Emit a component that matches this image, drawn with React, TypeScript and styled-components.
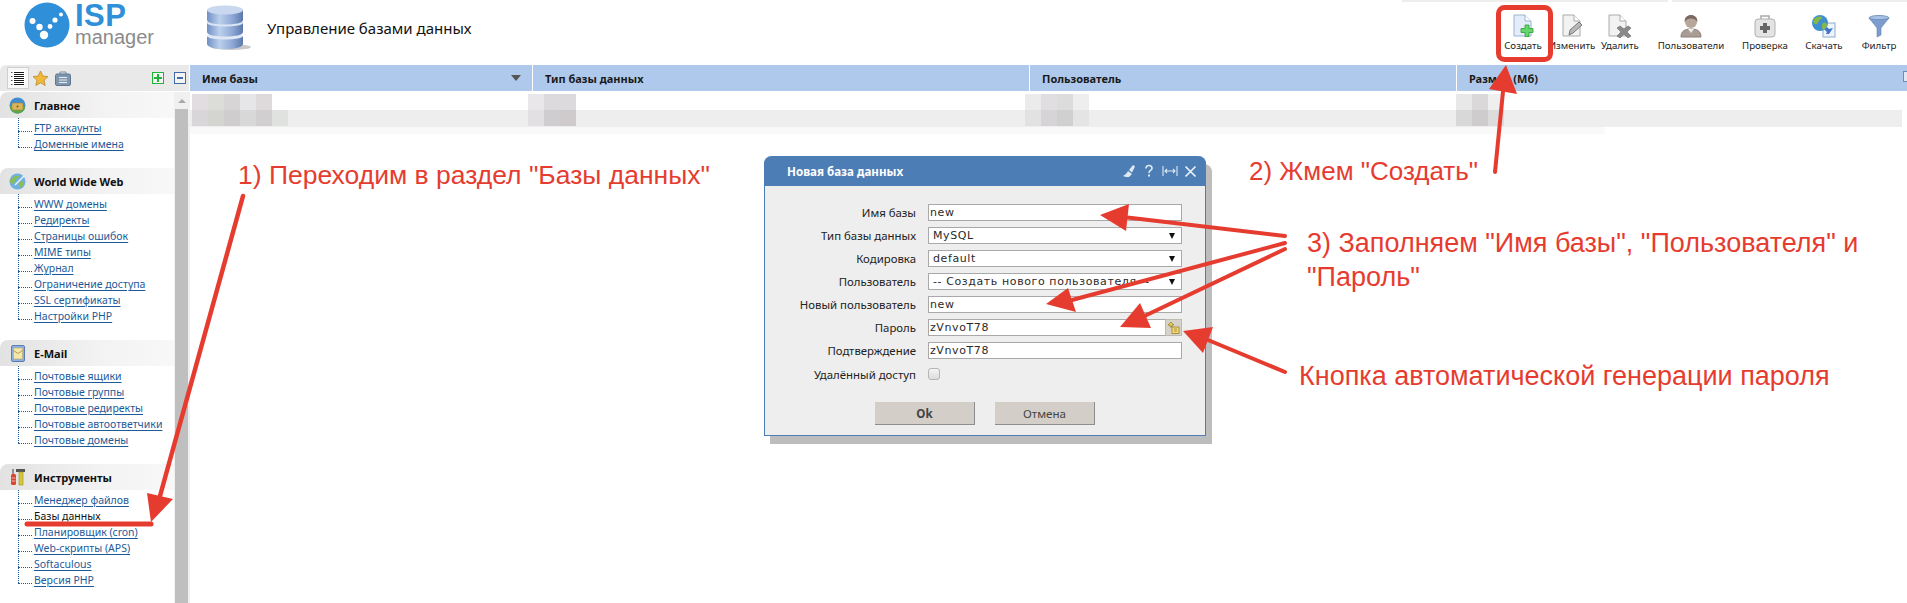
import React from "react";
import styled, { createGlobalStyle } from "styled-components";

const Global = createGlobalStyle`
  html, body { margin: 0; padding: 0; background: #fff; }
  body { font-family: "Noto Sans", "DejaVu Sans", sans-serif; }
`;

const UI = `"Noto Sans", "DejaVu Sans", sans-serif`;
const WIDE = `"DejaVu Sans", "Liberation Sans", sans-serif`;
const RED = "#e63c30";

const Page = styled.div`
  position: relative;
  width: 1907px;
  height: 603px;
  overflow: hidden;
  background: #fff;
`;
const Header = styled.header`
  display: flex;
  align-items: flex-start;
  height: 65px;
  position: relative;
`;
const TopStrip = styled.div`
  position: absolute;
  top: 0;
  left: 1402px;
  right: 0;
  height: 2px;
  background: linear-gradient(90deg, #eee 0, #eee 266px, #fff 266px, #fff 270px, #eee 270px);
`;
const Logo = styled.div`
  display: flex;
  width: 207px;
  padding: 2px 0 0 24px;
  box-sizing: border-box;
`;
const LogoWords = styled.div`
  display: flex;
  flex-direction: column;
  margin-left: 5px;
  font-family: "Liberation Sans", sans-serif;
`;
const LogoIsp = styled.span`
  color: #2f8fd8;
  font-size: 31px;
  font-weight: 700;
  line-height: 26px;
  letter-spacing: 0.5px;
  margin-top: 1px;
`;
const LogoManager = styled.span`
  color: #8b8b8b;
  font-size: 20px;
  line-height: 20px;
  margin-top: -2px;
`;
const PageTitle = styled.div`
  display: flex;
  align-items: center;
  gap: 16px;
  padding-top: 5px;
  flex: 1;
  font-size: 15px;
  color: #111;
  font-family: ${UI};
`;
const Tools = styled.nav`
  display: flex;
  padding: 14px 5px 0 0;
`;
const Tool = styled.div<{ $w: number }>`
  width: ${(p) => p.$w}px;
  display: flex;
  flex-direction: column;
  align-items: center;
  font-size: 9.7px;
  line-height: 12px;
  color: #222;
  gap: 2px;
`;
const Body = styled.div`
  display: flex;
  height: 538px;
`;
const Side = styled.aside`
  width: 190px;
  display: flex;
  flex-direction: column;
  flex: none;
`;
const SideBar = styled.div`
  height: 26px;
  margin-right: 1px;
  display: flex;
  align-items: center;
  background: #e9e9e9;
  border-top-left-radius: 6px;
  padding-left: 7px;
  box-sizing: border-box;
`;
const ActiveTab = styled.div`
  width: 22px;
  height: 22px;
  box-sizing: border-box;
  background: #f7f7f7;
  border: 1px solid #cfcfcf;
  display: flex;
  align-items: center;
  justify-content: center;
`;
const TabIcon = styled.div`
  display: flex;
  margin-left: 3px;
  margin-right: 3px;
`;
const ExpandBox = styled.div<{ $c: string; $ml: number }>`
  width: 12px;
  height: 12px;
  box-sizing: border-box;
  border: 1px solid ${(p) => p.$c};
  margin-left: ${(p) => p.$ml}px;
  display: flex;
  align-items: center;
  justify-content: center;
  background: #f4f4f4;
`;
const SideScroll = styled.div`
  display: flex;
  flex: 1;
  margin-top: 1px;
  min-height: 0;
`;
const Nav = styled.div`
  width: 174px;
  flex: none;
`;
const Scrollbar = styled.div`
  width: 16px;
  display: flex;
  flex-direction: column;
  align-items: stretch;
  background: #f0f0f0;
  box-sizing: border-box;
  padding-right: 2px;
  padding-left: 1px;
`;
const ScrollUp = styled.div`
  height: 17px;
  display: flex;
  align-items: center;
  justify-content: center;
`;
const ScrollArrow = styled.div`
  width: 0;
  height: 0;
  border-left: 4px solid transparent;
  border-right: 4px solid transparent;
  border-bottom: 4px solid #aaa;
`;
const ScrollThumb = styled.div`
  flex: 1;
  background: #bfbfbf;
`;
const Section = styled.section`
  margin-bottom: 16px;
`;
const SectionHead = styled.div`
  height: 26px;
  display: flex;
  align-items: center;
  background: linear-gradient(90deg, #e2e2e2 0%, #f3f3f3 60%, #f8f8f8 100%);
  border-top-left-radius: 8px;
  font-weight: 700;
  font-size: 11px;
  color: #111;
`;
const SectionIcon = styled.div`
  width: 34px;
  display: flex;
  justify-content: center;
  flex: none;
  padding-left: 1px;
  box-sizing: border-box;
`;
const TreeList = styled.ul`
  list-style: none;
  margin: 0;
  padding: 2px 0 0 0;
`;
const TreeItem = styled.li<{ $active?: boolean }>`
  position: relative;
  height: 16px;
  line-height: 16px;
  padding-left: 34px;
  font-size: 10.5px;
  color: ${(p) => (p.$active ? "#111" : "#1d5a99")};
  text-decoration: ${(p) => (p.$active ? "none" : "underline")};
  text-underline-offset: 2px;
  white-space: nowrap;
  &::before {
    content: "";
    position: absolute;
    left: 18px;
    top: 11px;
    width: 14px;
    border-top: 1px dotted #1d5a99;
  }
  &::after {
    content: "";
    position: absolute;
    left: 18px;
    top: -2px;
    height: 13px;
    border-left: 1px dotted #1d5a99;
  }
  &:not(:first-child)::after {
    top: -5px;
    height: 16px;
  }
`;
const Main = styled.main`
  flex: 1;
  display: flex;
  flex-direction: column;
  min-width: 0;
`;
const GridHead = styled.div`
  height: 26px;
  display: grid;
  grid-template-columns: 343px 497px 427px 1fr;
  background: #aec9ec;
`;
const HeadCell = styled.div`
  display: flex;
  align-items: center;
  justify-content: space-between;
  padding: 0 13px 0 12px;
  font-size: 11px;
  font-weight: 700;
  color: #1a1a1a;
  border-right: 1px solid #fff;
  position: relative;
  &:last-child { border-right: 0; }
`;
const SortMark = styled.span`
  width: 0;
  height: 0;
  border-left: 5px solid transparent;
  border-right: 5px solid transparent;
  border-top: 6px solid #555;
  margin-right: -2px;
`;
const ColMenu = styled.span`
  position: absolute;
  top: 6px;
  right: -6px;
  width: 8px;
  height: 9px;
  border: 1px solid #6a8cb8;
  background: #dfe8f4;
`;
const Rows = styled.div`
  position: relative;
  padding-right: 5px;
`;
const Row = styled.div<{ $bg: string; $h: number; $end?: number }>`
  height: ${(p) => p.$h}px;
  display: grid;
  grid-template-columns: 343px 497px 427px 1fr;
  background: ${(p) => p.$bg};
  margin-right: ${(p) => p.$end ?? 0}px;
`;
const Mosaic = styled.div<{ $ml: number; $top: number }>`
  display: flex;
  margin-left: ${(p) => p.$ml}px;
  padding-top: ${(p) => p.$top}px;
`;
const Tile = styled.div<{ $c: string }>`
  width: 16px;
  height: 16px;
  background: ${(p) => p.$c};
`;

const Modal = styled.div`
  position: absolute;
  left: 764px;
  top: 156px;
  width: 442px;
  height: 280px;
  box-sizing: border-box;
  border: 1px solid #4d7db5;
  border-top: 0;
  border-radius: 8px 8px 0 0;
  background: #eee;
  box-shadow: 6px 8px 0 #bdbdbd;
  display: flex;
  flex-direction: column;
`;
const ModalHead = styled.div`
  height: 30px;
  margin: 0 -1px;
  background: #4d7db5;
  border-radius: 8px 8px 0 0;
  display: flex;
  align-items: center;
  padding: 0 9px 0 23px;
  color: #fff;
  font-size: 11.6px;
  font-weight: 700;
`;
const ModalTitle = styled.div`
  flex: 1;
`;
const ModalIcons = styled.div`
  display: flex;
  align-items: center;
  gap: 6px;
`;
const Form = styled.div`
  display: grid;
  grid-template-columns: 151px 254px;
  column-gap: 12px;
  row-gap: 6px;
  padding-top: 18px;
  grid-auto-rows: 17px;
  align-items: center;
`;
const Label = styled.div`
  text-align: right;
  font-size: 11.4px;
  color: #222;
  white-space: nowrap;
`;
const TextBox = styled.div`
  height: 17px;
  box-sizing: border-box;
  background: #fff;
  border: 1px solid #a9a9a9;
  padding-left: 1px;
  display: flex;
  align-items: center;
  font-family: ${WIDE};
  font-size: 11px;
  letter-spacing: 0.6px;
  color: #2a2a2a;
  position: relative;
`;
const SelectBox = styled(TextBox)`
  padding-left: 4px;
  overflow: hidden;
  white-space: nowrap;
`;
const SelectArrow = styled.span`
  position: absolute;
  right: 0;
  top: 0;
  bottom: 0;
  width: 18px;
  background: #fff;
  display: flex;
  align-items: center;
  justify-content: center;
  &::after {
    content: "";
    border-left: 3.5px solid transparent;
    border-right: 3.5px solid transparent;
    border-top: 6px solid #111;
  }
`;
const KeyButton = styled.span`
  position: absolute;
  right: -1px;
  top: -1px;
  width: 17px;
  height: 17px;
  box-sizing: border-box;
  background: #d6d2c9;
  border: 1px solid #bdbab2;
  display: flex;
  align-items: center;
  justify-content: center;
`;
const Check = styled.div`
  width: 12px;
  height: 12px;
  box-sizing: border-box;
  border: 1px solid #b5b5b5;
  border-radius: 3px;
  background: linear-gradient(#f4f4f4, #dcdcdc);
  margin-top: 1px;
`;
const CheckLabel = styled(Label)`
  margin-top: 2px;
`;
const Buttons = styled.div`
  display: flex;
  gap: 20px;
  padding: 20px 0 0 110px;
`;
const Button = styled.div<{ $strong?: boolean }>`
  width: 100px;
  height: 23px;
  box-sizing: border-box;
  background: #d3cfc8;
  border-right: 1px solid #8e8e8e;
  border-bottom: 1px solid #8e8e8e;
  display: flex;
  align-items: center;
  justify-content: center;
  font-size: 11.6px;
  font-weight: ${(p) => (p.$strong ? 700 : 400)};
  color: #444;
`;
const Note = styled.div<{ $x: number; $y: number; $size?: number }>`
  position: absolute;
  left: ${(p) => p.$x}px;
  top: ${(p) => p.$y}px;
  font-family: "Liberation Sans", Arial, sans-serif;
  font-size: ${(p) => p.$size ?? 27}px;
  line-height: 34px;
  color: ${RED};
  white-space: nowrap;
`;
const Overlay = styled.svg`
  position: absolute;
  left: 0;
  top: 0;
  width: 1907px;
  height: 603px;
  pointer-events: none;
`;

const LogoMark = () => (
  <svg width="46" height="46" viewBox="0 0 46 46">
    <circle cx="23" cy="23" r="22.5" fill="#2f8fd8" />
    <g fill="#fff">
      <circle cx="8.5" cy="19" r="3" />
      <circle cx="15.5" cy="25" r="3.2" />
      <circle cx="20" cy="33" r="4.2" />
      <circle cx="26" cy="24.5" r="2.4" />
      <circle cx="31" cy="18" r="2.6" />
      <circle cx="37" cy="12.5" r="2" />
    </g>
  </svg>
);

const DbIcon = () => (
  <svg width="44" height="46" viewBox="0 0 44 46">
    <defs>
      <linearGradient id="dbg" x1="0" x2="1" y1="0" y2="0">
        <stop offset="0" stopColor="#6f8fc4" />
        <stop offset=".35" stopColor="#bcd0ec" />
        <stop offset=".7" stopColor="#8fa9d6" />
        <stop offset="1" stopColor="#5c79ad" />
      </linearGradient>
    </defs>
    <ellipse cx="24" cy="42" rx="20" ry="3" fill="#c9c9c9" />
    <path d="M0 31h36v8c0 3-8 5-18 5s-18-2-18-5z" fill="url(#dbg)" />
    <ellipse cx="18" cy="31" rx="18" ry="3.5" fill="#dfe8f5" />
    <path d="M0 17h36v10c0 3-8 4.500-18 4.500S0 30 0 27z" fill="url(#dbg)" />
    <ellipse cx="18" cy="18" rx="18" ry="3.500" fill="#dbe5f3" />
    <path d="M0 5h36v10c0 3-8 4.500-18 4.500S0 18 0 15z" fill="url(#dbg)" />
    <ellipse cx="18" cy="5" rx="18" ry="4.500" fill="#c9d8ee" />
  </svg>
);

const Sheet = ({ tint = "#f2f2f2", line = "#aaa" }: { tint?: string; line?: string }) => (
  <path d="M3 1h11l6 6v15H3z" fill={tint} stroke={line} strokeWidth="1" />
);

const CreateIcon = () => (
  <svg width="24" height="24" viewBox="0 0 24 24">
    <Sheet tint="#e3ecf8" line="#9db4d2" />
    <path d="M14 1v6h6" fill="#fff" stroke="#9db4d2" />
    <path d="M14 11h4v3.500h4v4h-4v4h-4v-4h-4v-4h4z" fill="#66d66a" stroke="#2b9c37" strokeWidth=".8" />
  </svg>
);
const EditIcon = () => (
  <svg width="24" height="24" viewBox="0 0 24 24">
    <Sheet />
    <path d="M14 1v6h6" fill="#fff" stroke="#aaa" />
    <path d="M9 21l1-5 9-8 3 3-9 8z" fill="#b8b8b8" stroke="#777" strokeWidth="1" />
  </svg>
);
const DeleteIcon = () => (
  <svg width="24" height="24" viewBox="0 0 24 24">
    <path d="M1 1h11l6 6v15H1z" fill="#f2f2f2" stroke="#aaa" />
    <path d="M12 1v6h6" fill="#fff" stroke="#aaa" />
    <path d="M12 12l4 3 4-3 3 2-4 4 4 4-3 2-4-4-4 4-3-2 4-4-4-4z" fill="#8a8a8a" stroke="#666" strokeWidth=".6" />
  </svg>
);
const UsersIcon = () => (
  <svg width="24" height="24" viewBox="0 0 24 24">
    <path d="M2 23c0-6 4-8 10-8s10 2 10 8z" fill="#a89c95" stroke="#8d7f79" />
    <path d="M9 15l3 4 3-4z" fill="#eee" />
    <circle cx="12" cy="8" r="6" fill="#b8a69b" />
    <path d="M5.500 8c0-5 3-7 6.500-7s6.500 2 6.500 7c-2-3-4-3.500-6.500-3.500S7.500 5 5.500 8z" fill="#7b6a62" />
  </svg>
);
const CheckIcon = () => (
  <svg width="24" height="24" viewBox="0 0 24 24">
    <path d="M8 5V2h8v3" fill="none" stroke="#aaa" strokeWidth="1.500" />
    <rect x="2" y="5" width="20" height="18" rx="3" fill="#e3e3e3" stroke="#b0b0b0" />
    <path d="M10 9h4v3h3v4h-3v3h-4v-3H7v-4h3z" fill="#666" />
  </svg>
);
const DownloadIcon = () => (
  <svg width="26" height="24" viewBox="0 0 26 24">
    <rect x="12" y="9" width="12" height="14" fill="#eef3fb" stroke="#8eaad3" />
    <path d="M22 14l-4 6h-3l1-2-3-3 3-2 2 2z" fill="#3f76c8" />
    <circle cx="9" cy="9" r="8" fill="#3f8fd0" />
    <path d="M3 5c3-3 6-3 8-2 1 2-2 2-3 4s-2 4-4 3-2-3-1-5z M12 9c2-1 4 0 4 2s-2 4-4 5c-1-2-2-5 0-7z" fill="#84b84a" />
  </svg>
);
const FilterIcon = () => (
  <svg width="24" height="24" viewBox="0 0 24 24">
    <ellipse cx="12" cy="4" rx="10" ry="2.500" fill="#a9c2e6" stroke="#7a97c4" />
    <path d="M2 4l8 10v9l4-2v-7l8-10c-3 2-17 2-20 0z" fill="#7b9ccc" stroke="#6384b6" strokeWidth=".6" />
  </svg>
);

const ListGlyph = () => (
  <svg width="16" height="16" viewBox="0 0 16 16">
    <rect x="1" y="0.500" width="14" height="15" fill="#fff" />
    {[2, 4, 6, 8, 10, 12, 14].map((y) => (
      <path key={y} d="M4 0h10" transform={`translate(0 ${y + 0.5})`} stroke="#1a1a1a" strokeWidth="1" />
    ))}
    {[2, 6, 10, 14].map((y) => (
      <path key={y} d="M1 0h1.500" transform={`translate(0 ${y + 0.5})`} stroke="#555" strokeWidth="1" />
    ))}
  </svg>
);
const StarGlyph = () => (
  <svg width="17" height="17" viewBox="0 0 17 17">
    <path d="M8.500 1l2.300 5 5.200.6-3.900 3.600 1.100 5.300-4.700-2.700-4.700 2.700 1.100-5.300L1 6.600 6.200 6z" fill="#f0b93a" stroke="#b98a2a" strokeWidth=".8" />
  </svg>
);
const CaseGlyph = () => (
  <svg width="16" height="15" viewBox="0 0 16 15">
    <path d="M5 3V1h6v2" fill="none" stroke="#7a8da3" />
    <rect x="0.500" y="3" width="15" height="11.500" rx="1.500" fill="#7f95ad" stroke="#5f7790" />
    <path d="M4 6.500h8M4 9h8M4 11.500h8" stroke="#e8eef5" />
  </svg>
);

const GlobeFolder = () => (
  <svg width="17" height="17" viewBox="0 0 17 17">
    <circle cx="8.500" cy="8.500" r="8" fill="#3f8fd0" />
    <path d="M1 9c4 1 11 1 15 0v2c-1 3-4 5.500-7.500 5.500S2 14 1 11z" fill="#5aa846" />
    <rect x="3" y="6" width="11" height="7" rx="1" fill="#d8b45c" stroke="#a78338" strokeWidth=".6" />
    <circle cx="8.500" cy="9.500" r="1" fill="#7b5a1f" />
  </svg>
);
const GlobeArrow = () => (
  <svg width="17" height="17" viewBox="0 0 17 17">
    <circle cx="8.500" cy="8.500" r="8" fill="#6fb0e0" />
    <path d="M2 6c3-3 6-4 8-3 0 2-3 2-4 5s-2 4-4 2-1-3 0-4zM10 9c2-1 5 0 5 1s-2 4-4 5c-1-2-2-4-1-6z" fill="#8bbd53" />
    <path d="M6 12l9-9" stroke="#e8f2fb" strokeWidth="1.500" />
  </svg>
);
const MailIcon = () => (
  <svg width="14" height="17" viewBox="0 0 14 17">
    <rect x="0.500" y="0.500" width="13" height="16" rx="1.500" fill="#8fb0e0" stroke="#5b7cb3" />
    <rect x="2.500" y="3" width="9" height="11" fill="#f5e7a8" stroke="#b79f52" strokeWidth=".5" />
    <path d="M2.500 5.500l4.500 3 4.500-3" fill="none" stroke="#a68c3f" strokeWidth=".8" />
  </svg>
);
const ToolsIcon = () => (
  <svg width="16" height="18" viewBox="0 0 16 18">
    <path d="M6 1h9v3H11v0H6z" fill="#555" />
    <rect x="9" y="4" width="4" height="13" fill="#d9c63c" stroke="#9d8f24" strokeWidth=".6" />
    <path d="M3 1v5" stroke="#777" strokeWidth="1.500" />
    <rect x="1" y="6" width="5" height="11" rx="1.500" fill="#d9452f" />
    <path d="M1.500 10h4M1.500 13h4" stroke="#fff" strokeWidth=".6" />
  </svg>
);

const DialogGlyphs = () => (
  <ModalIcons>
    <svg width="14" height="14" viewBox="0 0 14 14">
      <path d="M1 12c2-1 4-3 5-5l4 3c-1 1-2 2-3 3-2 0-4 0-6-1zM7 6l4-5 2 1.500-3 6z" fill="#dfe8f3" />
    </svg>
    <svg width="14" height="14" viewBox="0 0 14 14">
      <path d="M4 4.500C4 2.500 5.500 1.500 7 1.500s3 1 3 2.800C10 6.500 7 6.500 7 9" fill="none" stroke="#dfe8f3" strokeWidth="1.600" />
      <rect x="6" y="10.500" width="2" height="2" fill="#dfe8f3" />
    </svg>
    <svg width="16" height="14" viewBox="0 0 16 14">
      <path d="M1 2v10M15 2v10M3 7h10M5 5L3 7l2 2M11 5l2 2-2 2" fill="none" stroke="#dfe8f3" strokeWidth="1.100" />
    </svg>
    <svg width="13" height="13" viewBox="0 0 13 13">
      <path d="M1.500 1.500l10 10M11.500 1.500l-10 10" stroke="#eaf0f7" strokeWidth="1.700" />
    </svg>
  </ModalIcons>
);

const sections = [
  { title: "Главное", icon: <GlobeFolder />, items: ["FTP аккаунты", "Доменные имена"] },
  {
    title: "World Wide Web",
    icon: <GlobeArrow />,
    items: ["WWW домены", "Редиректы", "Страницы ошибок", "MIME типы", "Журнал", "Ограничение доступа", "SSL сертификаты", "Настройки PHP"],
  },
  {
    title: "E-Mail",
    icon: <MailIcon />,
    items: ["Почтовые ящики", "Почтовые группы", "Почтовые редиректы", "Почтовые автоответчики", "Почтовые домены"],
  },
  {
    title: "Инструменты",
    icon: <ToolsIcon />,
    items: ["Менеджер файлов", "Базы данных", "Планировщик (cron)", "Web-скрипты (APS)", "Softaculous", "Версия PHP"],
  },
];

const tools = [
  { w: 50, label: "Создать", icon: <CreateIcon /> },
  { w: 48, label: "Изменить", icon: <EditIcon /> },
  { w: 48, label: "Удалить", icon: <DeleteIcon /> },
  { w: 94, label: "Пользователи", icon: <UsersIcon /> },
  { w: 54, label: "Проверка", icon: <CheckIcon /> },
  { w: 64, label: "Скачать", icon: <DownloadIcon /> },
  { w: 46, label: "Фильтр", icon: <FilterIcon /> },
];

const mosaicTop = [
  { ml: 2, c: ["#e2dde1", "#dcdcd8", "#d8d5d7", "#e6e6e8", "#dedadc"] },
  { ml: -5, c: ["#e9e7ea", "#dcdadc", "#dcdadc"] },
  { ml: -5, c: ["#ebebeb", "#e0dee0", "#dcdcdc", "#eeeeee"] },
  { ml: -1, c: ["#e8e8e8", "#dbd8d9", "#efefef"] },
];
const mosaicBottom = [
  { ml: 2, c: ["#d8d6d8", "#d4d4d0", "#cfcdce", "#d8d8d9", "#d2cfd1", "#e0e2e0"] },
  { ml: -5, c: ["#e2e0e2", "#cfcdcf", "#cfcbcd"] },
  { ml: -5, c: ["#e2e2e2", "#d6d4d6", "#d0d0d0", "#e4e4e4"] },
  { ml: -1, c: ["#d8d8d8", "#cfcccd", "#dcdcdc"] },
];

const Arrow = ({ from, tip, a, b, w = 5 }: { from: [number, number]; tip: [number, number]; a: [number, number]; b: [number, number]; w?: number }) => (
  <g>
    <line x1={from[0]} y1={from[1]} x2={(a[0] + b[0]) / 2} y2={(a[1] + b[1]) / 2} stroke={RED} strokeWidth={w} strokeLinecap="round" />
    <polygon points={`${tip[0]},${tip[1]} ${a[0]},${a[1]} ${(a[0] + b[0]) / 2},${(a[1] + b[1]) / 2} ${b[0]},${b[1]}`} fill={RED} />
  </g>
);

export default function App() {
  return (
    <Page>
      <Global />
      <Header>
        <TopStrip />
        <Logo>
          <LogoMark />
          <LogoWords>
            <LogoIsp>ISP</LogoIsp>
            <LogoManager>manager</LogoManager>
          </LogoWords>
        </Logo>
        <PageTitle>
          <DbIcon />
          <span>Управление базами данных</span>
        </PageTitle>
        <Tools>
          {tools.map((t) => (
            <Tool key={t.label} $w={t.w}>
              {t.icon}
              <span>{t.label}</span>
            </Tool>
          ))}
        </Tools>
      </Header>
      <Body>
        <Side>
          <SideBar>
            <ActiveTab>
              <ListGlyph />
            </ActiveTab>
            <TabIcon>
              <StarGlyph />
            </TabIcon>
            <TabIcon>
              <CaseGlyph />
            </TabIcon>
            <ExpandBox $c="#22b33a" $ml={78}>
              <svg width="10" height="10" viewBox="0 0 10 10">
                <path d="M5 1v8M1 5h8" stroke="#22b33a" strokeWidth="2" />
              </svg>
            </ExpandBox>
            <ExpandBox $c="#3f6aa5" $ml={10}>
              <svg width="10" height="10" viewBox="0 0 10 10">
                <path d="M2 5h6" stroke="#3f6aa5" strokeWidth="2" />
              </svg>
            </ExpandBox>
          </SideBar>
          <SideScroll>
            <Nav>
              {sections.map((s) => (
                <Section key={s.title}>
                  <SectionHead>
                    <SectionIcon>{s.icon}</SectionIcon>
                    {s.title}
                  </SectionHead>
                  <TreeList>
                    {s.items.map((i) => (
                      <TreeItem key={i} $active={i === "Базы данных"}>
                        {i}
                      </TreeItem>
                    ))}
                  </TreeList>
                </Section>
              ))}
            </Nav>
            <Scrollbar>
              <ScrollUp>
                <ScrollArrow />
              </ScrollUp>
              <ScrollThumb />
            </Scrollbar>
          </SideScroll>
        </Side>
        <Main>
          <GridHead>
            <HeadCell>
              Имя базы
              <SortMark />
            </HeadCell>
            <HeadCell>Тип базы данных</HeadCell>
            <HeadCell>Пользователь</HeadCell>
            <HeadCell>
              Размер (Мб)
              <ColMenu />
            </HeadCell>
          </GridHead>
          <Rows>
            <Row $bg="#fff" $h={19}>
              {mosaicTop.map((m, i) => (
                <Mosaic key={i} $ml={m.ml} $top={3}>
                  {m.c.map((c, j) => (
                    <Tile key={j} $c={c} />
                  ))}
                </Mosaic>
              ))}
            </Row>
            <Row $bg="#eee" $h={17}>
              {mosaicBottom.map((m, i) => (
                <Mosaic key={i} $ml={m.ml} $top={0}>
                  {m.c.map((c, j) => (
                    <Tile key={j} $c={c} />
                  ))}
                </Mosaic>
              ))}
            </Row>
            <Row $bg="#f9f9f9" $h={7} $end={297} />
          </Rows>
        </Main>
      </Body>

      <Modal>
        <ModalHead>
          <ModalTitle>Новая база данных</ModalTitle>
          <DialogGlyphs />
        </ModalHead>
        <Form>
          <Label>Имя базы</Label>
          <TextBox>new</TextBox>
          <Label>Тип базы данных</Label>
          <SelectBox>
            MySQL
            <SelectArrow />
          </SelectBox>
          <Label>Кодировка</Label>
          <SelectBox>
            default
            <SelectArrow />
          </SelectBox>
          <Label>Пользователь</Label>
          <SelectBox>
            -- Создать нового пользователя --
            <SelectArrow />
          </SelectBox>
          <Label>Новый пользователь</Label>
          <TextBox>new</TextBox>
          <Label>Пароль</Label>
          <TextBox>
            zVnvoT78
            <KeyButton>
              <svg width="12" height="13" viewBox="0 0 12 13">
                <path d="M3 1l3 3H4v2H2V4H0z" fill="#e8c94a" stroke="#8a7420" strokeWidth=".6" />
                <rect x="4" y="6" width="7" height="6.500" fill="#f2dc7a" stroke="#8a7420" strokeWidth=".7" />
                <path d="M6 8h3M6 10h3" stroke="#8a7420" strokeWidth=".7" />
              </svg>
            </KeyButton>
          </TextBox>
          <Label>Подтверждение</Label>
          <TextBox>zVnvoT78</TextBox>
          <CheckLabel>Удалённый доступ</CheckLabel>
          <Check />
        </Form>
        <Buttons>
          <Button $strong>Ok</Button>
          <Button>Отмена</Button>
        </Buttons>
      </Modal>

      <Note $x={238} $y={158} $size={26.5}>1) Переходим в раздел "Базы данных"</Note>
      <Note $x={1249} $y={154} $size={26}>2) Жмем "Создать"</Note>
      <Note $x={1307} $y={226}>3) Заполняем "Имя базы", "Пользователя" и</Note>
      <Note $x={1307} $y={260}>"Пароль"</Note>
      <Note $x={1299} $y={359}>Кнопка автоматической генерации пароля</Note>

      <Overlay viewBox="0 0 1907 603">
        <rect x="1498.500" y="7.500" width="52" height="52" rx="6" fill="none" stroke={RED} strokeWidth="5" />
        <Arrow from={[243, 196]} tip={[151, 522]} a={[147, 493]} b={[173, 499]} w={4.500} />
        <line x1="27" y1="524" x2="151" y2="524" stroke={RED} strokeWidth="5" strokeLinecap="round" />
        <Arrow from={[1495, 172]} tip={[1506, 65]} a={[1489, 89]} b={[1517, 94]} w={4} />
        <Arrow from={[1285, 236]} tip={[1100, 215]} a={[1129, 204]} b={[1126, 231]} w={4} />
        <Arrow from={[1285, 243]} tip={[1046, 304]} a={[1068, 288]} b={[1076, 312]} w={4} />
        <Arrow from={[1285, 249]} tip={[1120, 327]} a={[1140, 303]} b={[1151, 328]} w={4} />
        <Arrow from={[1285, 372]} tip={[1183, 331]} a={[1213, 327]} b={[1203, 353]} w={4} />
      </Overlay>
    </Page>
  );
}
